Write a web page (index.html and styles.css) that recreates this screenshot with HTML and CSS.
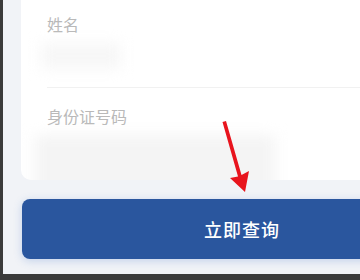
FILE: index.html
```html
<!DOCTYPE html>
<html lang="zh">
<head>
<meta charset="utf-8">
<link rel="stylesheet" href="styles.css">
</head>
<body>
<div class="screen">
  <div class="card">
    <div class="field">
      <div class="label">姓名</div>
      <div class="blur blur-name"></div>
    </div>
    <div class="divider"></div>
    <div class="field field-id">
      <div class="label">身份证号码</div>
      <div class="blur blur-id"></div>
    </div>
  </div>
  <button class="submit">立即查询</button>
</div>
<svg class="arrow" width="360" height="280" viewBox="0 0 360 280">
  <path d="M222.5 122 L226 121 L241.5 175 L249 171 L245 192 L230 178 L238 176.5 Z" fill="#e8141d"/>
</svg>
</body>
</html>
```

FILE: styles.css
```css
html, body {
  margin: 0;
  padding: 0;
}
body {
  width: 360px;
  height: 280px;
  overflow: hidden;
  background: #3b3b3b;
  font-family: "Noto Sans CJK SC", "Noto Sans", sans-serif;
  position: relative;
}
.screen {
  margin-left: 3px;
  height: 274px;
  background: #f1f3f7;
  overflow: hidden;
}
.card {
  margin-left: 18px;
  margin-top: -20px;
  width: 420px;
  height: 200px;
  box-sizing: border-box;
  padding: 34px 0 0 26px;
  background: #ffffff;
  border-radius: 10px;
  overflow: hidden;
}
.label {
  font-size: 16px;
  line-height: 21px;
  color: #b9b9b9;
}
.blur {
  filter: blur(7px);
}
.blur-name {
  margin: 8px 0 0 -6px;
  width: 80px;
  height: 26px;
  background: #f7f7f7;
}
.divider {
  margin-top: 18px;
  height: 1px;
  background: #f1f1f1;
}
.field-id {
  padding-top: 18px;
}
.blur-id {
  margin: 8px 0 0 -12px;
  width: 240px;
  height: 60px;
  background: #f4f4f4;
}
.submit {
  display: block;
  margin: 19px 0 0 19px;
  width: 440px;
  height: 60px;
  border: none;
  border-radius: 8px;
  background: #2a569e;
  color: #ffffff;
  font-family: "Noto Sans CJK SC", "Noto Sans", sans-serif;
  font-size: 18px;
  font-weight: 500;
  letter-spacing: 1px;
  box-shadow: 0 2px 8px rgba(60, 110, 200, 0.25);
}
.arrow {
  position: absolute;
  left: 0;
  top: 0;
}
```
